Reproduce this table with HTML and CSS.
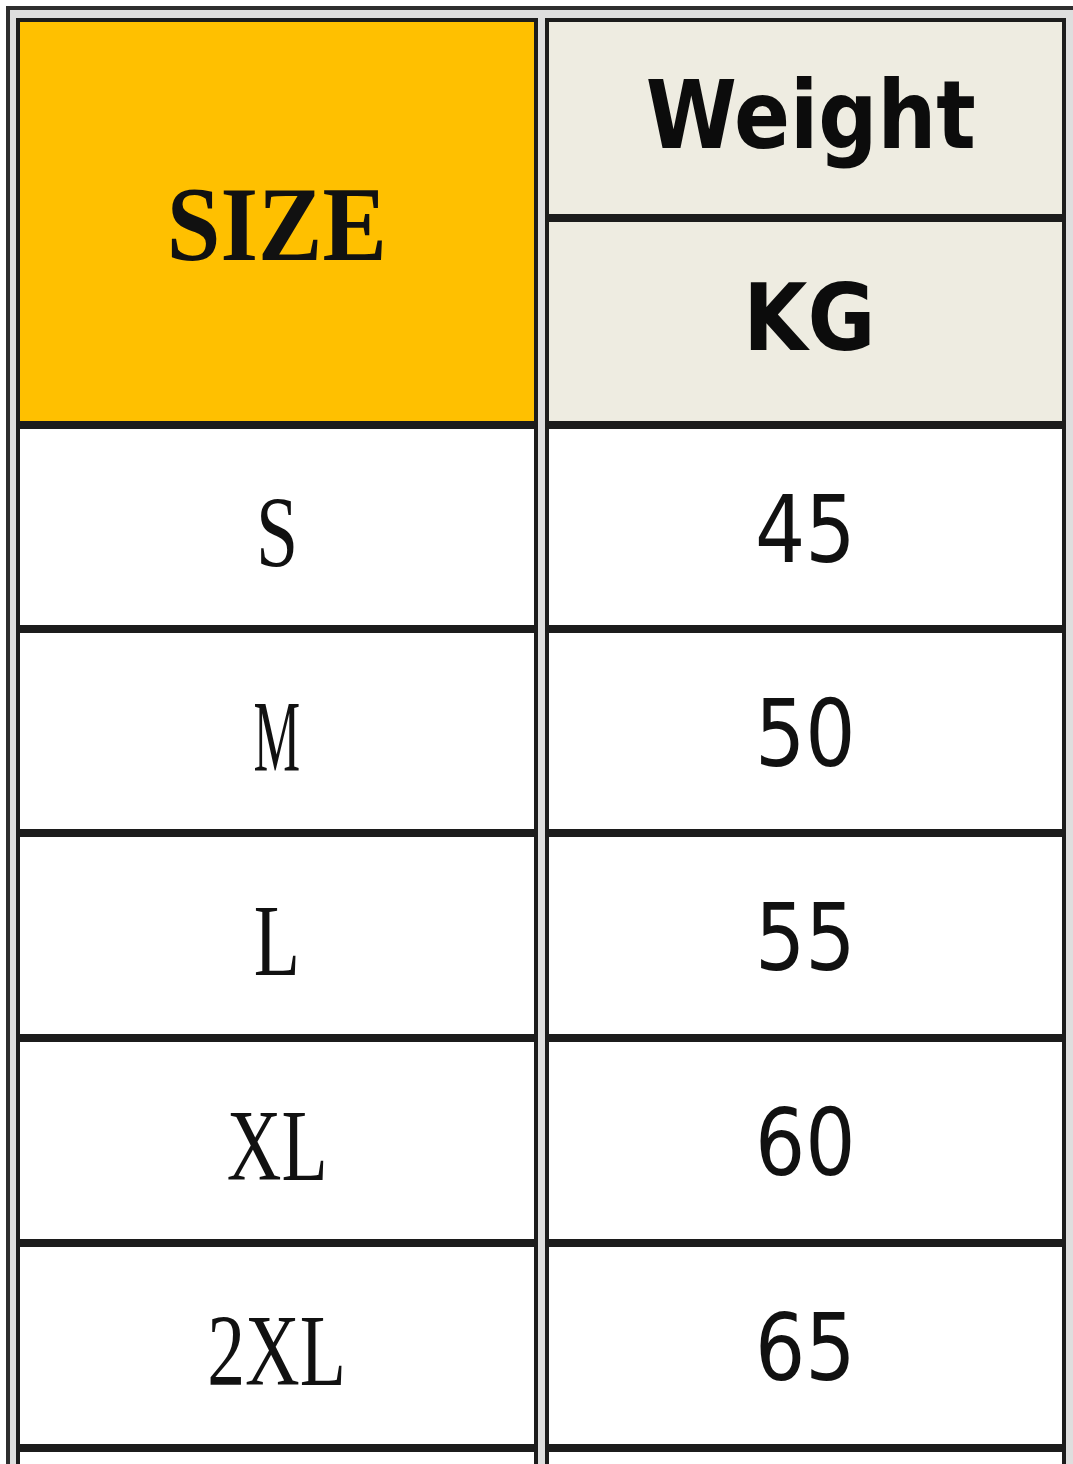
FILE: index.html
```html
<!DOCTYPE html>
<html lang="en">
<head>
<meta charset="utf-8">
<title>Size chart</title>
<link rel="stylesheet" href="styles.css">
</head>
<body>
<div class="chart">
  <div class="cell head-size"><span class="txt size-title">SIZE</span></div>
  <div class="cell head-weight"><span class="txt sans-bold w-title">Weight</span></div>
  <div class="cell head-unit"><span class="txt sans-bold kg-title">KG</span></div>

  <div class="cell"><span class="txt serif-size">S</span></div>
  <div class="cell"><span class="txt sans-num">45</span></div>

  <div class="cell"><span class="txt serif-size narrow">M</span></div>
  <div class="cell"><span class="txt sans-num">50</span></div>

  <div class="cell"><span class="txt serif-size">L</span></div>
  <div class="cell"><span class="txt sans-num">55</span></div>

  <div class="cell"><span class="txt serif-size">XL</span></div>
  <div class="cell"><span class="txt sans-num">60</span></div>

  <div class="cell"><span class="txt serif-size">2XL</span></div>
  <div class="cell"><span class="txt sans-num">65</span></div>

  <div class="cell"></div>
  <div class="cell"></div>
</div>
</body>
</html>
```

FILE: styles.css
```css
html, body {
  margin: 0;
  padding: 0;
  background: #ffffff;
  overflow: hidden;
}

.chart {
  margin: 6px 0 0 6px;
  width: 1100px;
  border-top: 4px solid #2e2e2e;
  border-left: 4px solid #2e2e2e;
  padding: 8px 0 0 6px;
  background: #dedede;
  display: grid;
  grid-template-columns: 522px 521px;
  grid-template-rows: 200px 207px 204px 204px 205px 205px 205px 60px;
  column-gap: 7px;
}

.cell {
  box-sizing: border-box;
  border: 4px solid #1c1c1c;
  background: #ffffff;
  display: flex;
  align-items: center;
  justify-content: center;
  color: #111111;
}

.head-size {
  grid-row: 1 / span 2;
  background: #ffc000;
}

.head-weight,
.head-unit {
  background: #eeece1;
}

.txt {
  display: inline-block;
  white-space: nowrap;
  line-height: 1;
}

.size-title {
  font-family: "Liberation Serif", "DejaVu Serif", serif;
  font-weight: bold;
  font-size: 106px;
  transform: scaleX(0.91);
  margin-top: 7px;
}

.sans-bold {
  font-family: "DejaVu Sans", Verdana, sans-serif;
  font-weight: bold;
  color: #0c0c0c;
}

.w-title {
  font-size: 95px;
  transform: scaleX(0.87);
  margin-top: -6px;
  margin-left: 10px;
}

.kg-title {
  font-size: 92px;
  transform: scaleX(0.9);
  margin-top: -6px;
  margin-left: 8px;
}

.serif-size {
  font-family: "Liberation Serif", "DejaVu Serif", serif;
  font-size: 101px;
  transform: scaleX(0.75);
  margin-top: 12px;
}

.serif-size.narrow {
  transform: scaleX(0.52);
}

.sans-num {
  font-family: "DejaVu Sans", Verdana, sans-serif;
  font-size: 93px;
  transform: scaleX(0.85);
  margin-top: 6px;
}
```
